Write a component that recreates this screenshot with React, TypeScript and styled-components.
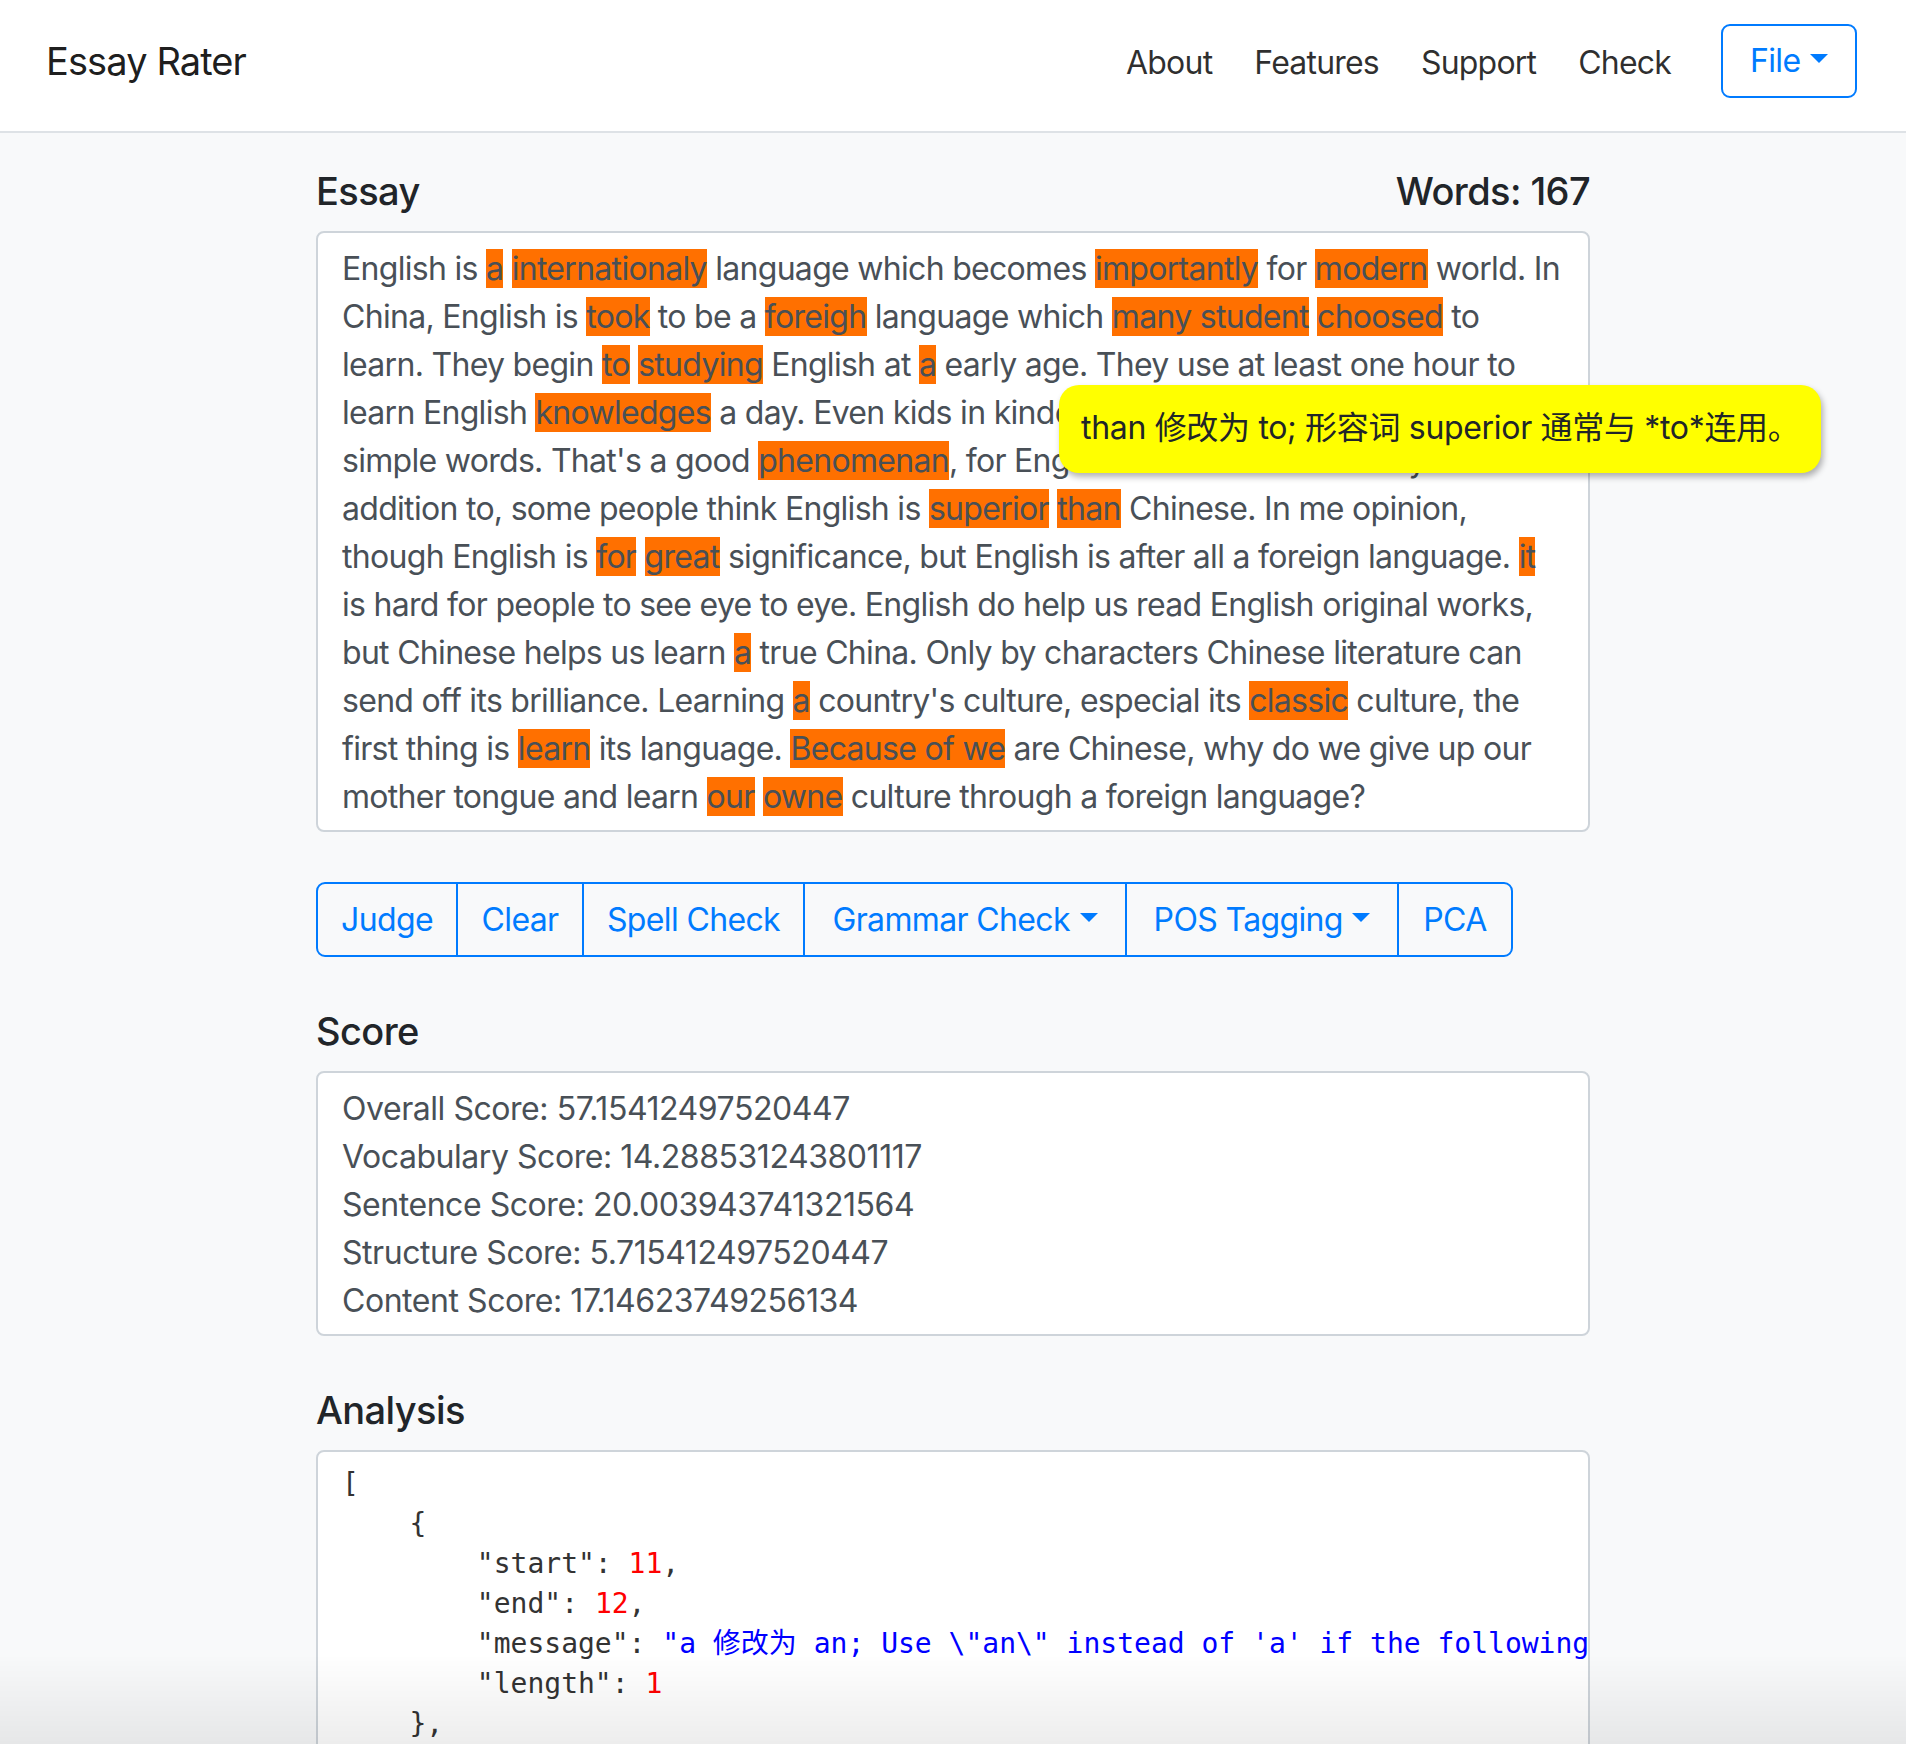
import styled, { createGlobalStyle } from "styled-components";

// Types
type Seg = string | { m: string };

// Data
const m = (text: string): Seg => ({ m: text });

const essay: Seg[][] = [
  ["English is ", m("a"), " ", m("internationaly"), " language which becomes ", m("importantly"), " for ", m("modern"), " world. In"],
  ["China, English is ", m("took"), " to be a ", m("foreigh"), " language which ", m("many student"), " ", m("choosed"), " to"],
  ["learn. They begin ", m("to"), " ", m("studying"), " English at ", m("a"), " early age. They use at least one hour to"],
  ["learn English ", m("knowledges"), " a day. Even kids in kindergarten have begun learning"],
  ["simple words. That's a good ", m("phenomenan"), ", for English is essential nowadays. In"],
  ["addition to, some people think English is ", m("superior"), " ", m("than"), " Chinese. In me opinion,"],
  ["though English is ", m("for"), " ", m("great"), " significance, but English is after all a foreign language. ", m("it")],
  ["is hard for people to see eye to eye. English do help us read English original works,"],
  ["but Chinese helps us learn ", m("a"), " true China. Only by characters Chinese literature can"],
  ["send off its brilliance. Learning ", m("a"), " country's culture, especial its ", m("classic"), " culture, the"],
  ["first thing is ", m("learn"), " its language. ", m("Because of we"), " are Chinese, why do we give up our"],
  ["mother tongue and learn ", m("our"), " ", m("owne"), " culture through a foreign language?"],
];

const scores = [
  ["Overall Score", "57.15412497520447"],
  ["Vocabulary Score", "14.288531243801117"],
  ["Sentence Score", "20.003943741321564"],
  ["Structure Score", "5.715412497520447"],
  ["Content Score", "17.14623749256134"],
];

const tools = [
  { label: "Judge", w: 142 },
  { label: "Clear", w: 128 },
  { label: "Spell Check", w: 223 },
  { label: "Grammar Check", w: 324, caret: true },
  { label: "POS Tagging", w: 274, caret: true },
  { label: "PCA", w: 116 },
];

const App = () => {
  return (
    <>
      <GlobalStyle />
      <NavBar>
        <Brand>Essay Rater</Brand>
        <NavRight>
          <NavLinks>
            <NavLink>About</NavLink>
            <NavLink>Features</NavLink>
            <NavLink>Support</NavLink>
            <NavLink>Check</NavLink>
          </NavLinks>
          <OutlineButton $caret>File</OutlineButton>
        </NavRight>
      </NavBar>

      <Main>
        <SectionHead $top={34}>
          <Title>Essay</Title>
          <Title>Words: 167</Title>
        </SectionHead>
        <EssayWrap>
          <TextBox $tracking={-0.7}>
            {essay.map((line, i) => (
              <Line key={i}>
                {line.map((seg, j) =>
                  typeof seg === "string" ? seg : <Mark key={j}>{seg.m}</Mark>
                )}
              </Line>
            ))}
          </TextBox>
          <Tooltip>than 修改为 to; 形容词 superior 通常与 *to*连用。</Tooltip>
        </EssayWrap>

        <ButtonGroup>
          {tools.map((t) => (
            <GroupButton key={t.label} $w={t.w} $caret={t.caret}>
              {t.label}
            </GroupButton>
          ))}
        </ButtonGroup>

        <SectionHead $top={50}>
          <Title>Score</Title>
        </SectionHead>
        <TextBox $tracking={-0.45}>
          {scores.map(([k, v]) => (
            <Line key={k}>
              {k}: {v}
            </Line>
          ))}
        </TextBox>

        <SectionHead $top={50}>
          <Title>Analysis</Title>
        </SectionHead>
        <CodeBox>
          <CodeLine>[</CodeLine>
          <CodeLine>{"    {"}</CodeLine>
          <CodeLine>
            {'        "start": '}
            <Num>11</Num>,
          </CodeLine>
          <CodeLine>
            {'        "end": '}
            <Num>12</Num>,
          </CodeLine>
          <CodeLine>
            {'        "message": '}
            <Str>{`"a 修改为 an; Use \\"an\\" instead of 'a' if the following word starts with a vowel sound, e.g. 'an article', 'an hour'",`}</Str>
          </CodeLine>
          <CodeLine>
            {'        "length": '}
            <Num>1</Num>
          </CodeLine>
          <CodeLine>{"    },"}</CodeLine>
          <CodeLine>{"    {"}</CodeLine>
          <CodeLine>
            {'        "start": '}
            <Num>13</Num>,
          </CodeLine>
          <CodeLine>
            {'        "end": '}
            <Num>27</Num>,
          </CodeLine>
        </CodeBox>
      </Main>
      <BottomShade />
    </>
  );
};

// Styles
const GlobalStyle = createGlobalStyle`
  html, body {
    margin: 0;
    padding: 0;
  }
  body {
    background: #f8f9fa;
    font-family: Inter, "Noto Sans", "Noto Sans CJK SC", sans-serif;
    color: #212529;
    letter-spacing: -0.32px;
  }
`;

const NavBar = styled.nav`
  height: 133px;
  box-sizing: border-box;
  padding: 0 49px 10px 46px;
  background: #ffffff;
  border-bottom: 2px solid #dee2e6;
  display: flex;
  align-items: center;
  justify-content: space-between;
`;

const Brand = styled.div`
  font-size: 38px;
  line-height: 60px;
  letter-spacing: -0.9px;
  color: rgba(0, 0, 0, 0.9);
`;

const NavRight = styled.div`
  display: flex;
  align-items: center;
`;

const NavLinks = styled.div`
  display: flex;
  align-items: center;
  padding-top: 4px;
  margin-right: 29px;
`;

const NavLink = styled.a`
  padding: 0 21px;
  font-size: 32px;
  line-height: 48px;
  letter-spacing: -0.8px;
  color: rgba(0, 0, 0, 0.82);
  cursor: pointer;
`;

const caret = `
  &::after {
    content: "";
    display: inline-block;
    margin-left: 0.3em;
    vertical-align: 0.255em;
    border-top: 0.3em solid;
    border-right: 0.3em solid transparent;
    border-left: 0.3em solid transparent;
  }
`;

const OutlineButton = styled.button<{ $caret?: boolean }>`
  box-sizing: border-box;
  height: 74px;
  width: 136px;
  padding: 0 24px;
  font-family: inherit;
  font-size: 32px;
  line-height: 48px;
  letter-spacing: -0.02em;
  color: #007bff;
  background: transparent;
  border: 2px solid #007bff;
  border-radius: 9px;
  ${(p) => (p.$caret ? caret : "")}
`;

const Main = styled.main`
  width: 1274px;
  margin: 0 auto;
  padding-bottom: 40px;
`;

const SectionHead = styled.div<{ $top?: number }>`
  display: flex;
  justify-content: space-between;
  align-items: baseline;
  margin: ${(p) => p.$top ?? 31}px 0 16px;
`;

const Title = styled.h5`
  margin: 0;
  font-size: 38px;
  line-height: 48px;
  font-weight: 500;
  letter-spacing: -0.6px;
  color: #212529;
`;

const EssayWrap = styled.div`
  position: relative;
`;

const TextBox = styled.div<{ $tracking: number }>`
  box-sizing: border-box;
  background: #ffffff;
  border: 2px solid #ced4da;
  border-radius: 8px;
  padding: 12px 24px 9px;
  font-size: 32px;
  line-height: 48px;
  letter-spacing: ${(p) => p.$tracking}px;
  color: #495057;
`;

const Line = styled.div`
  white-space: nowrap;
`;

const Mark = styled.span`
  background: #ff7000;
`;

const Tooltip = styled.div`
  position: absolute;
  left: 743px;
  top: 154px;
  box-sizing: border-box;
  width: 762px;
  height: 88px;
  padding: 19px 22px 21px;
  background: #ffff00;
  border-radius: 20px;
  box-shadow: 2px 4px 6px rgba(0, 0, 0, 0.3);
  font-size: 32px;
  line-height: 48px;
  color: #212529;
  white-space: nowrap;
`;

const ButtonGroup = styled.div`
  display: flex;
  margin-top: 50px;
`;

const GroupButton = styled.button<{ $w: number; $caret?: boolean }>`
  box-sizing: border-box;
  width: ${(p) => p.$w}px;
  height: 75px;
  padding: 0;
  margin-left: -2px;
  font-family: inherit;
  font-size: 32px;
  line-height: 48px;
  letter-spacing: -0.02em;
  color: #007bff;
  background: transparent;
  border: 2px solid #007bff;
  border-radius: 0;
  white-space: nowrap;
  &:first-child {
    margin-left: 0;
    border-radius: 9px 0 0 9px;
  }
  &:last-child {
    border-radius: 0 9px 9px 0;
  }
  ${(p) => (p.$caret ? caret : "")}
`;

const CodeBox = styled.pre`
  box-sizing: border-box;
  margin: 0;
  min-height: 600px;
  background: #ffffff;
  border: 2px solid #ced4da;
  border-radius: 8px;
  padding: 12px 24px;
  overflow: hidden;
  font-family: "DejaVu Sans Mono", "Noto Sans CJK SC", monospace;
  font-size: 28px;
  line-height: 40px;
  letter-spacing: 0;
  color: #333333;
`;

const CodeLine = styled.div`
  white-space: pre;
`;

const Num = styled.span`
  color: #ff0000;
`;

const Str = styled.span`
  color: #0000ff;
`;

const BottomShade = styled.div`
  position: fixed;
  left: 0;
  right: 0;
  bottom: 0;
  height: 90px;
  pointer-events: none;
  background: linear-gradient(to bottom, rgba(0, 0, 0, 0), rgba(0, 0, 0, 0.07));
`;

// Exports
export default App;
